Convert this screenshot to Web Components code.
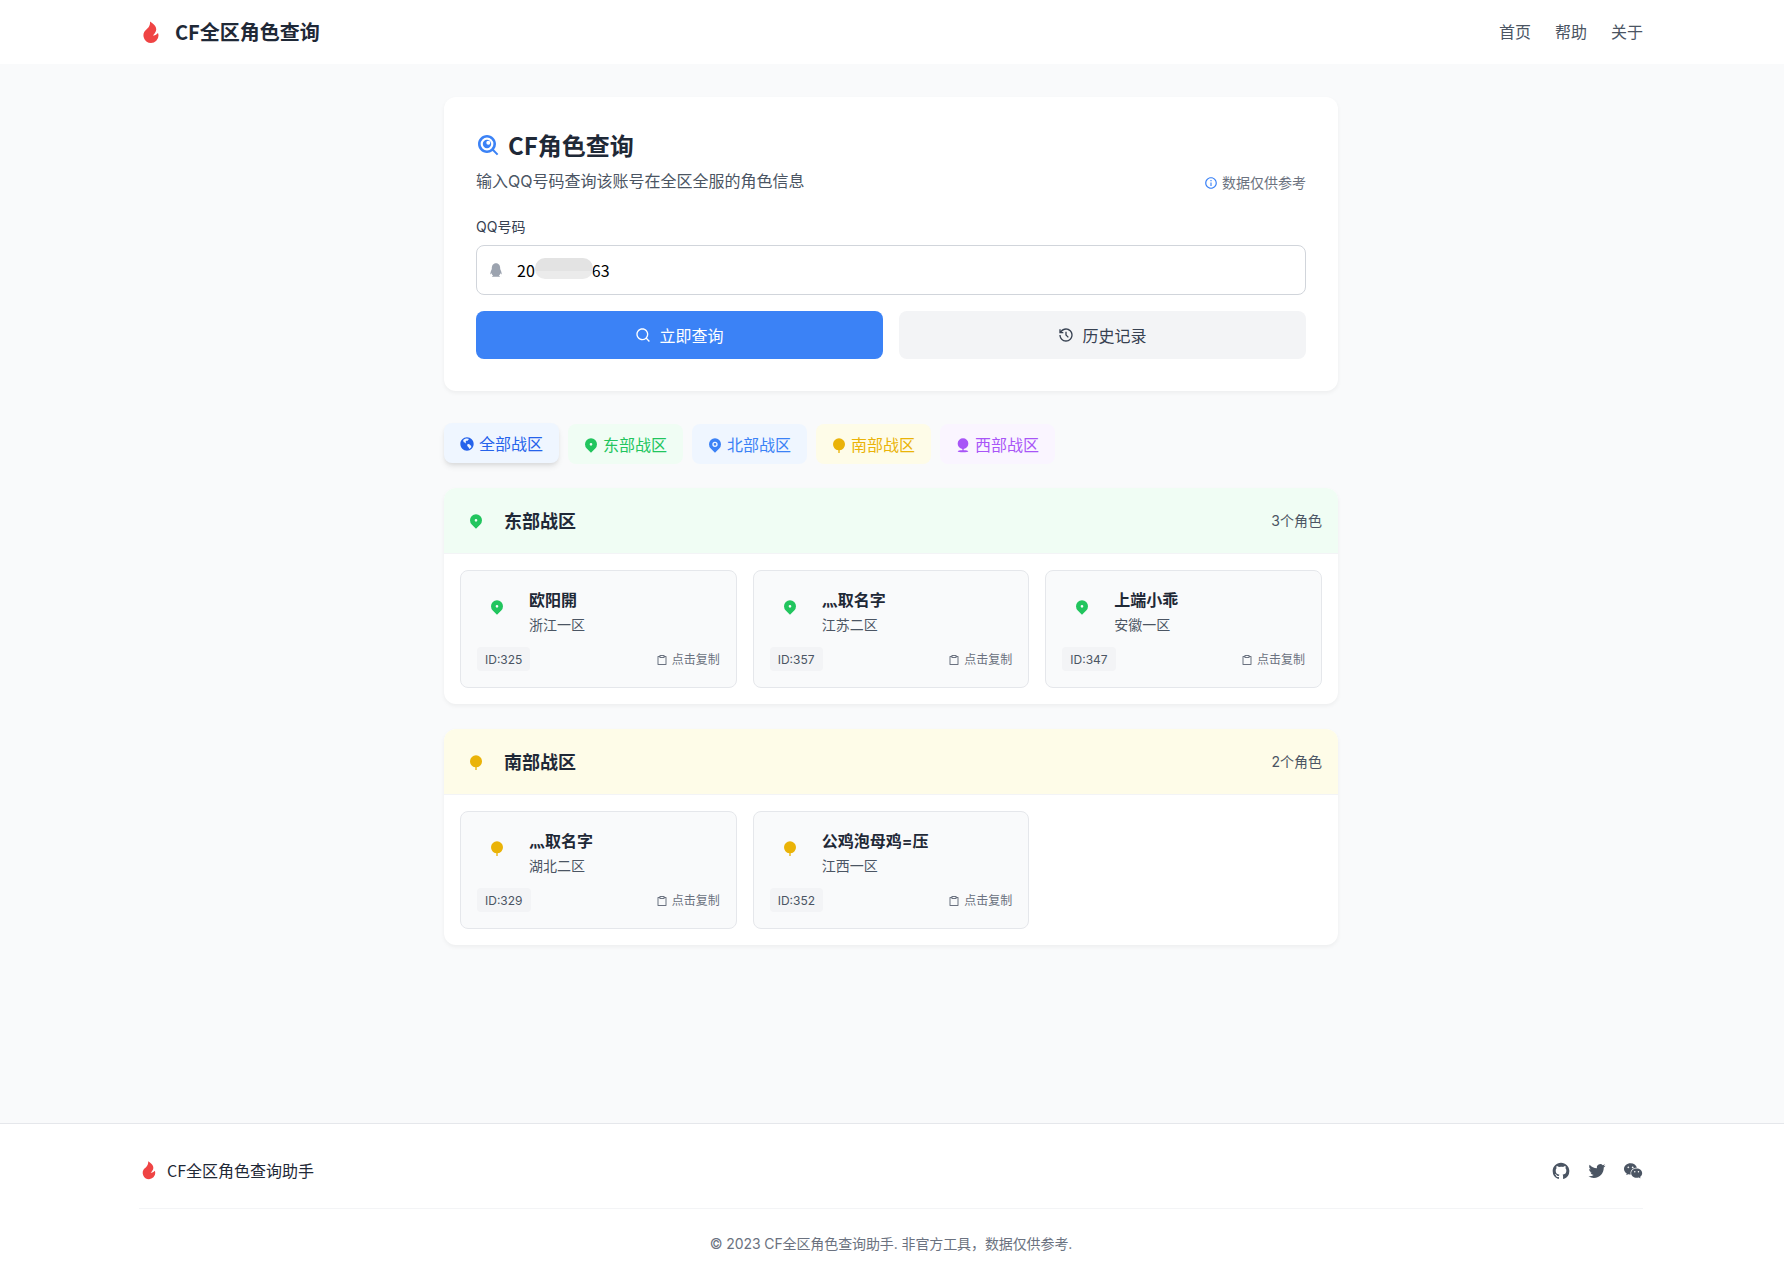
<!DOCTYPE html>
<html lang="zh-CN">
<head>
<meta charset="utf-8">
<title>CF全区角色查询</title>
<style>
  html, body { margin: 0; padding: 0; }
  body {
    min-height: 100vh;
    display: flex;
    flex-direction: column;
    background: #f9fafb;
    color: #1f2937;
    font-family: Inter, "Noto Sans CJK SC", sans-serif;
  }
  main {
    flex: 1;
    width: 894px;
    margin-left: 444px;
    padding: 33px 0 32px;
    box-sizing: border-box;
  }
  query-card { margin-bottom: 33px; }
  region-tabs { margin-bottom: 24px; }
  region-section { margin-bottom: 25px; }
</style>
</head>
<body>
<app-header></app-header>
<main>
  <query-card></query-card>
  <region-tabs></region-tabs>
  <region-section name="东部战区" count="3个角色" color="#22c55e" tint="#f0fdf4" pin="pin2">
    <role-card name="欧阳開" zone="浙江一区" role-id="325" color="#22c55e" pin="pin2"></role-card>
    <role-card name="灬取名字" zone="江苏二区" role-id="357" color="#22c55e" pin="pin2"></role-card>
    <role-card name="上端小乖" zone="安徽一区" role-id="347" color="#22c55e" pin="pin2"></role-card>
  </region-section>
  <region-section name="南部战区" count="2个角色" color="#eab308" tint="#fefce8" pin="pin3">
    <role-card name="灬取名字" zone="湖北二区" role-id="329" color="#eab308" pin="pin3"></role-card>
    <role-card name="公鸡泡母鸡=压" zone="江西一区" role-id="352" color="#eab308" pin="pin3"></role-card>
  </region-section>
</main>
<app-footer></app-footer>

<script>
const ICONS = {
  fire: 'M12 23a7.5 7.5 0 0 1-5.138-12.963C8.204 8.774 11.5 6.5 11 1.5c6 4 9 8 3 14 1 0 2.5 0 5-2.47.27.773.5 1.604.5 2.47A7.5 7.5 0 0 1 12 23z',
  searchEye: 'M18.031 16.617l4.283 4.282-1.415 1.415-4.282-4.283A8.96 8.96 0 0 1 11 20c-4.968 0-9-4.032-9-9s4.032-9 9-9 9 4.032 9 9a8.96 8.96 0 0 1-1.969 5.617zM11 4.6a6.4 6.4 0 1 0 0 12.8 6.4 6.4 0 0 0 0-12.8zM11 6.8a4.2 4.2 0 1 1 0 8.4 4.2 4.2 0 0 1 0-8.4zM12.3 7.7a2 2 0 1 0 0 4 2 2 0 0 0 0-4z',
  search: 'M18.031 16.617l4.283 4.282-1.415 1.415-4.282-4.283A8.96 8.96 0 0 1 11 20c-4.968 0-9-4.032-9-9s4.032-9 9-9 9 4.032 9 9a8.96 8.96 0 0 1-1.969 5.617zm-2.006-.742A6.977 6.977 0 0 0 18 11c0-3.868-3.133-7-7-7-3.868 0-7 3.132-7 7 0 3.867 3.132 7 7 7a6.977 6.977 0 0 0 4.875-1.975l.15-.15z',
  history: 'M12 2c5.523 0 10 4.477 10 10s-4.477 10-10 10S2 17.523 2 12h2c0 4.418 3.582 8 8 8s8-3.582 8-8-3.582-8-8-8C9.25 4 6.824 5.387 5.385 7.5H8v2H2v-6h2V6c1.824-2.43 4.729-4 8-4zm1 5v4.585l3.243 3.243-1.415 1.415L11 12.413V7h2z',
  info: 'M12 22C6.477 22 2 17.523 2 12S6.477 2 12 2s10 4.477 10 10-4.477 10-10 10zm0-2a8 8 0 1 0 0-16 8 8 0 0 0 0 16zM11 7h2v2h-2V7zm0 4h2v6h-2v-6z',
  qq: 'M19.913 14.529a25.96 25.96 0 0 0-.69-1.871l-.93-2.32c0-.026.012-.482.012-.717C18.305 5.65 16.411 2 12 2 7.589 2 5.695 5.65 5.695 9.621c0 .235.012.691.012.717l-.93 2.32a25.96 25.96 0 0 0-.69 1.871c-.878 2.824-.594 3.993-.377 4.019.466.056 1.814-2.13 1.814-2.13 0 1.266.652 2.918 2.062 4.109-.527.162-1.173.412-1.589.719-.374.276-.327.557-.26.67.296.5 5.077.32 6.263.164 1.186.156 5.967.336 6.263-.164.067-.113.114-.394-.26-.67-.416-.307-1.062-.557-1.59-.719 1.41-1.191 2.063-2.843 2.063-4.11 0 0 1.348 2.187 1.814 2.131.217-.026.501-1.195-.377-4.019z',
  earth: 'M12 22C6.477 22 2 17.523 2 12S6.477 2 12 2s10 4.477 10 10-4.477 10-10 10zm6.355-6.048v-.105c0-.922 0-1.343-.652-1.716a7.374 7.374 0 0 0-.645-.325c-.367-.167-.61-.276-.938-.756a12.014 12.014 0 0 1-.116-.172c-.345-.525-.594-.903-1.542-.753-1.865.296-2.003.624-2.085 1.178l-.013.091c-.121.81-.143 1.082.195 1.437 1.265 1.327 2.023 2.284 2.253 2.844.112.273.4 1.1.202 1.918a8.185 8.185 0 0 0 3.151-2.237c.11-.374.19-.84.19-1.404zM12 3.833c-2.317 0-4.41.966-5.896 2.516.177.123.331.296.437.534.204.457.204.928.204 1.345 0 .328 0 .64.105.865.144.308.766.44 1.315.554.197.042.399.084.583.135.506.14.898.595 1.211.96.13.151.323.374.42.43.05-.036.211-.211.29-.498.062-.22.044-.414-.045-.52-.56-.66-.529-1.93-.356-2.399.272-.739 1.122-.684 1.744-.644.232.015.45.03.614.009.622-.078.814-1.025.949-1.21.292-.4 1.186-1.003 1.74-1.375A8.138 8.138 0 0 0 12 3.833z',
  pin: 'M18.364 17.364L12 23.728l-6.364-6.364a9 9 0 1 1 12.728 0zM12 15a4 4 0 1 0 0-8 4 4 0 0 0 0 8zm0-2a2 2 0 1 1 0-4 2 2 0 0 1 0 4z',
  pin2: 'M18.364 17.364L12 23.728l-6.364-6.364a9 9 0 1 1 12.728 0zM12 13a2 2 0 1 0 0-4 2 2 0 0 0 0 4z',
  pin3: 'M11 19.945A9.001 9.001 0 0 1 12 2a9 9 0 0 1 1 17.945V24h-2v-4.055z',
  pin4: 'M11 17.938A8.001 8.001 0 0 1 12 2a8 8 0 0 1 1 15.938v2.074c3.946.092 7 .723 7 1.488 0 .828-3.582 1.5-8 1.5s-8-.672-8-1.5c0-.765 3.054-1.396 7-1.488v-2.074z',
  clipboard: 'M7 4V2h10v2h3.007c.548 0 .993.445.993.993v16.014a.994.994 0 0 1-.993.993H3.993A.994.994 0 0 1 3 21.007V4.993C3 4.445 3.445 4 3.993 4H7zm0 2H5v14h14V6h-2v2H7V6zm2-2v2h6V4H9z',
  twitter: 'M22.162 5.656a8.384 8.384 0 0 1-2.402.658A4.196 4.196 0 0 0 21.6 4c-.82.488-1.719.83-2.656 1.015a4.182 4.182 0 0 0-7.126 3.814 11.874 11.874 0 0 1-8.62-4.37 4.168 4.168 0 0 0-.566 2.103c0 1.45.738 2.731 1.86 3.481a4.168 4.168 0 0 1-1.894-.523v.052a4.185 4.185 0 0 0 3.355 4.101 4.21 4.21 0 0 1-1.89.072A4.185 4.185 0 0 0 7.97 16.65a8.394 8.394 0 0 1-6.191 1.732 11.83 11.83 0 0 0 6.41 1.88c7.693 0 11.9-6.373 11.9-11.9 0-.18-.005-.362-.013-.54a8.496 8.496 0 0 0 2.087-2.165z',
  github: 'M12 2C6.475 2 2 6.475 2 12a9.994 9.994 0 0 0 6.838 9.488c.5.087.687-.213.687-.476 0-.237-.013-1.024-.013-1.862-2.512.463-3.162-.612-3.362-1.175-.113-.288-.6-1.175-1.025-1.413-.35-.187-.85-.65-.013-.662.788-.013 1.35.725 1.538 1.025.9 1.512 2.338 1.087 2.912.825.088-.65.35-1.087.638-1.337-2.225-.25-4.55-1.113-4.55-4.938 0-1.088.387-1.987 1.025-2.688-.1-.25-.45-1.275.1-2.65 0 0 .837-.262 2.75 1.026a9.28 9.28 0 0 1 2.5-.338c.85 0 1.7.112 2.5.337 1.912-1.3 2.75-1.024 2.75-1.024.55 1.375.2 2.4.1 2.65.637.7 1.025 1.587 1.025 2.687 0 3.838-2.337 4.688-4.562 4.938.362.312.675.912.675 1.85 0 1.337-.013 2.412-.013 2.75 0 .262.188.574.688.474A10.016 10.016 0 0 0 22 12c0-5.525-4.475-10-10-10z',
  wechat: 'M18.574 13.711a.91.91 0 0 0 .898-.898c0-.498-.399-.898-.898-.898s-.898.4-.898.898c0 .5.4.898.898.898zm-4.425 0a.91.91 0 0 0 .898-.898c0-.498-.4-.898-.898-.898-.5 0-.898.4-.898.898 0 .5.399.898.898.898zm6.567 5.04a.347.347 0 0 0-.172.37c0 .048 0 .097.025.147.098.417.294 1.081.294 1.106 0 .073.025.122.025.172a.22.22 0 0 1-.221.22c-.05 0-.074-.024-.123-.048l-1.449-.836a.799.799 0 0 0-.344-.098c-.073 0-.147 0-.196.024-.688.197-1.4.295-2.161.295-3.66 0-6.607-2.457-6.607-5.505 0-3.047 2.947-5.505 6.607-5.505 3.659 0 6.606 2.458 6.606 5.505 0 1.647-.884 3.146-2.284 4.154zM16.673 8.099a9.105 9.105 0 0 0-.28-.005c-3.984 0-7.364 2.698-7.364 6.272 0 .6.1 1.178.28 1.727h-.089a9.972 9.972 0 0 1-2.525-.318c-.076-.025-.153-.025-.23-.025a.74.74 0 0 0-.382.128l-1.705.979c-.051.025-.076.05-.127.05a.265.265 0 0 1-.255-.255c0-.076.025-.127.051-.204.026-.025.23-.738.332-1.223.025-.05.025-.127.025-.178a.567.567 0 0 0-.23-.459C2.254 13.298 1.2 11.47 1.2 9.466c0-3.746 3.54-6.766 7.901-6.766 3.76 0 6.914 2.245 7.572 5.399zm-5.09.55c.583 0 1.067-.484 1.067-1.066 0-.583-.484-1.067-1.066-1.067-.583 0-1.067.484-1.067 1.067 0 .582.484 1.066 1.067 1.066zm-5.2 0c.584 0 1.067-.484 1.067-1.066 0-.583-.483-1.067-1.066-1.067-.582 0-1.066.484-1.066 1.067 0 .582.484 1.066 1.066 1.066z'
};

function icon(name, size, color) {
  return `<svg width="${size}" height="${size}" viewBox="0 0 24 24" fill="${color || 'currentColor'}" style="display:block;flex:none"><path fill-rule="evenodd" d="${ICONS[name]}"/></svg>`;
}

class AppHeader extends HTMLElement {
  constructor() {
    super();
    this.attachShadow({ mode: 'open' }).innerHTML = `<style>
      :host { display: block; background: #fff; }
      .bar { height: 64px; box-sizing: border-box; padding: 0 141px 2px 139px; display: flex; align-items: center; justify-content: space-between; }
      .logo { display: flex; align-items: center; gap: 12px; font-family: "Noto Sans CJK SC", sans-serif; font-size: 20px; font-weight: 700; color: #1f2937; }
      .logo svg { position: relative; top: 1px; }
      nav { display: flex; gap: 24px; font-size: 16px; color: #4b5563; }
    </style>
    <div class="bar">
      <div class="logo">${icon('fire', 24, '#ef4444')}<span>CF全区角色查询</span></div>
      <nav><span>首页</span><span>帮助</span><span>关于</span></nav>
    </div>`;
  }
}

class QueryCard extends HTMLElement {
  constructor() {
    super();
    this.attachShadow({ mode: 'open' }).innerHTML = `<style>
      :host { display: block; background: #fff; border-radius: 12px; padding: 32px; box-shadow: 0 2px 4px rgba(0,0,0,.05); }
      h1 { margin: 0; display: flex; align-items: center; gap: 8px; font-family: "Noto Sans CJK SC", sans-serif; font-size: 24px; line-height: 32px; font-weight: 700; color: #1f2937; }
      .sub { display: flex; justify-content: space-between; align-items: flex-end; margin-top: 8px; margin-bottom: 24px; }
      .sub p { margin: 0; font-size: 16px; line-height: 24px; color: #4b5563; }
      .note { display: flex; align-items: center; gap: 4px; font-size: 14px; line-height: 20px; color: #6b7280; }
      label { display: block; font-size: 14px; line-height: 20px; color: #374151; margin-bottom: 8px; }
      .input { position: relative; height: 50px; box-sizing: border-box; border: 1px solid #d1d5db; border-radius: 8px; background: #fff; display: flex; align-items: center; padding-left: 11px; font-family: "Noto Sans CJK SC", sans-serif; font-size: 16px; color: #000; }
      .input .val { margin-left: 13px; display: flex; }
      .blur { position: absolute; left: 58px; top: 12px; width: 58px; height: 21px; border-radius: 10px; background: linear-gradient(#e3e3e3 60%, #ebebeb 60%); }
      .gapfill { width: 57px; }
      .btns { display: grid; grid-template-columns: 1fr 1fr; gap: 16px; margin-top: 16px; }
      .btn { height: 48px; border-radius: 8px; display: flex; align-items: center; justify-content: center; gap: 8px; font-size: 16px; }
      .primary { background: #3b82f6; color: #fff; }
      .ghost { background: #f3f4f6; color: #374151; }
    </style>
    <h1>${icon('searchEye', 24, '#3b82f6')}<span>CF角色查询</span></h1>
    <div class="sub">
      <p>输入QQ号码查询该账号在全区全服的角色信息</p>
      <div class="note">${icon('info', 14, '#3b82f6')}<span>数据仅供参考</span></div>
    </div>
    <label>QQ号码</label>
    <div class="input">
      ${icon('qq', 16, '#9ca3af')}
      <div class="val"><span>20</span><span class="gapfill"></span><span>63</span></div>
      <div class="blur"></div>
    </div>
    <div class="btns">
      <div class="btn primary">${icon('search', 16)}<span>立即查询</span></div>
      <div class="btn ghost">${icon('history', 16)}<span>历史记录</span></div>
    </div>`;
  }
}

class RegionTabs extends HTMLElement {
  constructor() {
    super();
    const tabs = [
      ['全部战区', 'earth', '#2563eb', '#eff6ff'],
      ['东部战区', 'pin2', '#22c55e', '#f0fdf4'],
      ['北部战区', 'pin', '#3b82f6', '#eff6ff'],
      ['南部战区', 'pin3', '#eab308', '#fefce8'],
      ['西部战区', 'pin4', '#a855f7', '#faf5ff']
    ];
    this.attachShadow({ mode: 'open' }).innerHTML = `<style>
      :host { display: flex; gap: 9px; }
      .tab { display: flex; align-items: center; gap: 4px; padding: 9px 16px 7px 15px; border-radius: 8px; font-size: 16px; line-height: 24px; }
      .tab.on { transform: translateY(-1px); box-shadow: 0 4px 6px -1px rgba(0,0,0,.1), 0 2px 4px -1px rgba(0,0,0,.06); }
    </style>
    ${tabs.map((t, i) => `<div class="tab${i === 0 ? ' on' : ''}" style="color:${t[2]};background:${t[3]}">${icon(t[1], 16)}<span>${t[0]}</span></div>`).join('')}`;
  }
}

class RegionSection extends HTMLElement {
  constructor() {
    super();
    this.attachShadow({ mode: 'open' }).innerHTML = `<style>
      :host { display: block; background: #fff; border-radius: 12px; overflow: hidden; box-shadow: 0 2px 4px rgba(0,0,0,.05); }
      header { display: flex; align-items: center; justify-content: space-between; padding: 16px 16px 17px; border-bottom: 1px solid #f3f4f6; }
      .left { display: flex; align-items: center; gap: 12px; }
      .ic { width: 32px; height: 32px; box-sizing: border-box; padding-top: 2px; display: flex; align-items: center; justify-content: center; }
      h2 { margin: 0; font-family: "Noto Sans CJK SC", sans-serif; font-size: 18px; line-height: 28px; font-weight: 700; color: #1f2937; }
      .count { font-size: 14px; line-height: 20px; color: #4b5563; margin-top: 2px; }
      .grid { display: grid; grid-template-columns: repeat(3, 1fr); gap: 16px; padding: 16px; }
    </style>
    <header style="background:${this.getAttribute('tint')}">
      <div class="left"><div class="ic">${icon(this.getAttribute('pin'), 16, this.getAttribute('color'))}</div><h2>${this.getAttribute('name')}</h2></div>
      <span class="count">${this.getAttribute('count')}</span>
    </header>
    <div class="grid"><slot></slot></div>`;
  }
}

class RoleCard extends HTMLElement {
  constructor() {
    super();
    this.attachShadow({ mode: 'open' }).innerHTML = `<style>
      :host { display: block; background: #f9fafb; border: 1px solid #e5e7eb; border-radius: 8px; padding: 16px; min-width: 0; }
      .top { display: flex; gap: 12px; }
      .ic { width: 40px; height: 40px; flex: none; display: flex; align-items: center; justify-content: center; }
      .name { font-size: 16px; line-height: 24px; padding-top: 1px; font-weight: 600; color: #1f2937; }
      .zone { font-size: 14px; line-height: 20px; color: #4b5563; margin-top: 3px; }
      .bottom { display: flex; align-items: center; justify-content: space-between; margin-top: 12px; }
      .id { font-size: 12px; line-height: 16px; padding: 5px 8px 3px; background: #f3f4f6; border-radius: 4px; color: #4b5563; }
      .copy { display: flex; align-items: center; gap: 4px; font-size: 12px; line-height: 16px; padding-top: 2px; color: #6b7280; }
    </style>
    <div class="top">
      <div class="ic">${icon(this.getAttribute('pin'), 16, this.getAttribute('color'))}</div>
      <div><div class="name">${this.getAttribute('name')}</div><div class="zone">${this.getAttribute('zone')}</div></div>
    </div>
    <div class="bottom">
      <span class="id">ID:${this.getAttribute('role-id')}</span>
      <span class="copy">${icon('clipboard', 12)}<span>点击复制</span></span>
    </div>`;
  }
}

class AppFooter extends HTMLElement {
  constructor() {
    super();
    this.attachShadow({ mode: 'open' }).innerHTML = `<style>
      :host { display: block; background: #fff; border-top: 1px solid #e5e7eb; }
      .wrap { padding: 32px 141px 12px 139px; }
      .row { height: 28px; display: flex; align-items: center; justify-content: space-between; margin-bottom: 24px; }
      .brand { display: flex; align-items: center; gap: 8px; font-family: "Noto Sans CJK SC", sans-serif; font-size: 16px; color: #1f2937; }
      .social { display: flex; gap: 16px; padding-top: 1px; color: #4b5563; }
      .copy { border-top: 1px solid #f3f4f6; padding-top: 25px; text-align: center; font-size: 14px; line-height: 20px; letter-spacing: -.1px; color: #6b7280; }
    </style>
    <div class="wrap">
      <div class="row">
        <div class="brand">${icon('fire', 20, '#ef4444')}<span>CF全区角色查询助手</span></div>
        <div class="social">${icon('github', 20)}${icon('twitter', 20)}${icon('wechat', 20)}</div>
      </div>
      <div class="copy">© 2023 CF全区角色查询助手. 非官方工具，数据仅供参考.</div>
    </div>`;
  }
}

customElements.define('app-header', AppHeader);
customElements.define('query-card', QueryCard);
customElements.define('region-tabs', RegionTabs);
customElements.define('region-section', RegionSection);
customElements.define('role-card', RoleCard);
customElements.define('app-footer', AppFooter);
</script>
</body>
</html>
